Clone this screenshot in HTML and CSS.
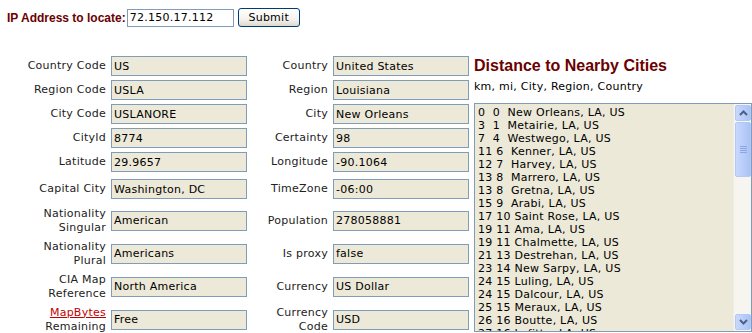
FILE: index.html
```html
<!DOCTYPE html>
<html lang="en">
<head>
    <meta charset="UTF-8">
    <title>IP Address Locator</title>
    <link rel="stylesheet" href="styles.css">
</head>
<body>
<form class="locate-bar">
    <label class="locate-label" for="ip">IP Address to locate:</label>
    <input class="locate-input" id="ip" type="text" value="72.150.17.112">
    <button class="xp-button" type="button">Submit</button>
</form>

<div class="results">
    <div class="details">
        <span class="lbl">Country Code</span><input class="field" value="US" readonly>
        <span class="lbl">Country</span><input class="field" value="United States" readonly>

        <span class="lbl">Region Code</span><input class="field" value="USLA" readonly>
        <span class="lbl">Region</span><input class="field" value="Louisiana" readonly>

        <span class="lbl">City Code</span><input class="field" value="USLANORE" readonly>
        <span class="lbl">City</span><input class="field" value="New Orleans" readonly>

        <span class="lbl">CityId</span><input class="field" value="8774" readonly>
        <span class="lbl">Certainty</span><input class="field" value="98" readonly>

        <span class="lbl">Latitude</span><input class="field" value="29.9657" readonly>
        <span class="lbl">Longitude</span><input class="field" value="-90.1064" readonly>

        <span class="lbl">Capital City</span><input class="field" value="Washington, DC" readonly>
        <span class="lbl">TimeZone</span><input class="field" value="-06:00" readonly>

        <span class="lbl">Nationality<br>Singular</span><input class="field" value="American" readonly>
        <span class="lbl">Population</span><input class="field" value="278058881" readonly>

        <span class="lbl">Nationality<br>Plural</span><input class="field" value="Americans" readonly>
        <span class="lbl">Is proxy</span><input class="field" value="false" readonly>

        <span class="lbl">CIA Map<br>Reference</span><input class="field" value="North America" readonly>
        <span class="lbl">Currency</span><input class="field" value="US Dollar" readonly>

        <span class="lbl"><a href="#">MapBytes</a><br>Remaining</span><input class="field" value="Free" readonly>
        <span class="lbl">Currency<br>Code</span><input class="field" value="USD" readonly>
    </div>

    <div class="nearby">
        <h2>Distance to Nearby Cities</h2>
        <div class="legend">km, mi, City, Region, Country</div>
        <div class="listbox">
            <div class="list-lines" id="cities"></div>
            <div class="scrollbar">
                <div class="sb-btn">
                    <svg width="9" height="6" viewBox="0 0 9 6"><path d="M1 5 L4.5 1.5 L8 5" fill="none" stroke="#4d6185" stroke-width="2"/></svg>
                </div>
                <div class="sb-thumb">
                    <span></span><span></span><span></span><span></span>
                </div>
                <div class="sb-track"></div>
                <div class="sb-btn">
                    <svg width="9" height="6" viewBox="0 0 9 6"><path d="M1 1 L4.5 4.5 L8 1" fill="none" stroke="#4d6185" stroke-width="2"/></svg>
                </div>
            </div>
        </div>
    </div>
</div>

<script>
var nearby = [
    [0, 0, 'New Orleans'], [3, 1, 'Metairie'], [7, 4, 'Westwego'],
    [11, 6, 'Kenner'], [12, 7, 'Harvey'], [13, 8, 'Marrero'],
    [13, 8, 'Gretna'], [15, 9, 'Arabi'], [17, 10, 'Saint Rose'],
    [19, 11, 'Ama'], [19, 11, 'Chalmette'], [21, 13, 'Destrehan'],
    [23, 14, 'New Sarpy'], [24, 15, 'Luling'], [24, 15, 'Dalcour'],
    [25, 15, 'Meraux'], [26, 16, 'Boutte'], [27, 16, 'Lafitte']
];

// pad each number to two characters like the original select list
function pad(n) {
    var s = String(n);
    return s.length < 2 ? s + ' ' : s;
}

document.getElementById('cities').textContent = nearby.map(function(c) {
    return pad(c[0]) + ' ' + pad(c[1]) + ' ' + c[2] + ', LA, US';
}).join('\n');
</script>
</body>
</html>
```

FILE: styles.css
```css
/* General styles */
body {
    margin: 0;
    font-family: "DejaVu Sans", Verdana, sans-serif;
    font-size: 11px;
    letter-spacing: 0.25px;
    color: #000;
    background: #fff;
}

/* Top locate bar */
.locate-bar {
    display: flex;
    align-items: center;
    height: 19px;
    padding: 8px 0 0 7px;
}

.locate-label {
    font-family: "Liberation Sans", Arial, sans-serif;
    font-weight: bold;
    font-size: 12px;
    letter-spacing: 0;
    color: #6b0000;
    margin-right: 1px;
}

.locate-input {
    width: 101px;
    height: 14px;
    padding: 1px 2px;
    border: 1px solid #7f9db9;
    font: 11px "DejaVu Sans", Verdana, sans-serif;
    letter-spacing: 0.25px;
    color: #000;
}

.xp-button {
    margin-left: 4px;
    width: 62px;
    height: 19px;
    padding: 0;
    border: 1px solid #003c74;
    border-radius: 3px;
    background: linear-gradient(#ffffff, #f4f3ee 60%, #dcd9ce);
    font: 11px "DejaVu Sans", Verdana, sans-serif;
    letter-spacing: 0.25px;
    color: #000;
}

/* Results area */
.results {
    display: flex;
    gap: 5px;
    margin-top: 27px;
}

.details {
    display: grid;
    grid-template-columns: 106px 136px 76px 136px;
    grid-template-rows: 24px 24px 24px 24px 24px 30px 33px 33px 33px 33px;
    column-gap: 5px;
    align-items: center;
}

.lbl {
    text-align: right;
    line-height: 14px;
    color: #222;
}

.lbl a {
    color: #c00000;
}

.field {
    box-sizing: border-box;
    width: 136px;
    height: 20px;
    padding: 0 2px;
    border: 1px solid #7f9db9;
    background: #ece9d8;
    font: 11px "DejaVu Sans", Verdana, sans-serif;
    letter-spacing: 0.25px;
    color: #000;
}

/* Nearby cities */
.nearby {
    width: 278px;
}

.nearby h2 {
    margin: 2px 0 0;
    font-family: "Liberation Sans", Arial, sans-serif;
    font-size: 16px;
    line-height: 19px;
    letter-spacing: 0;
    color: #6b0000;
}

.legend {
    margin-top: 5px;
    line-height: 14px;
}

.listbox {
    display: flex;
    height: 229px;
    margin-top: 9px;
    box-sizing: border-box;
    border: 1px solid #7f9db9;
    background: #ece9d8;
}

.list-lines {
    flex: 1;
    overflow: hidden;
    padding: 2px 0 0 3px;
    white-space: pre;
    line-height: 13px;
}

/* XP style scrollbar */
.scrollbar {
    display: flex;
    flex-direction: column;
    width: 16px;
    padding: 1px 0 1px 1px;
    background: #f6f5f0;
    border-left: 1px solid #eeede5;
}

.sb-btn,
.sb-thumb {
    box-sizing: border-box;
    border: 1px solid #b4c8f5;
    border-radius: 2px;
    background: linear-gradient(90deg, #c9d8fc, #b9cefb 50%, #a9c2f5);
}

.sb-btn {
    display: flex;
    align-items: center;
    justify-content: center;
    height: 16px;
}

.sb-thumb {
    display: flex;
    flex-direction: column;
    align-items: center;
    justify-content: center;
    gap: 1px;
    height: 55px;
    margin-top: 1px;
}

.sb-thumb span {
    width: 7px;
    height: 1px;
    background: #8ca6e4;
}

.sb-track {
    flex: 1;
}
```
